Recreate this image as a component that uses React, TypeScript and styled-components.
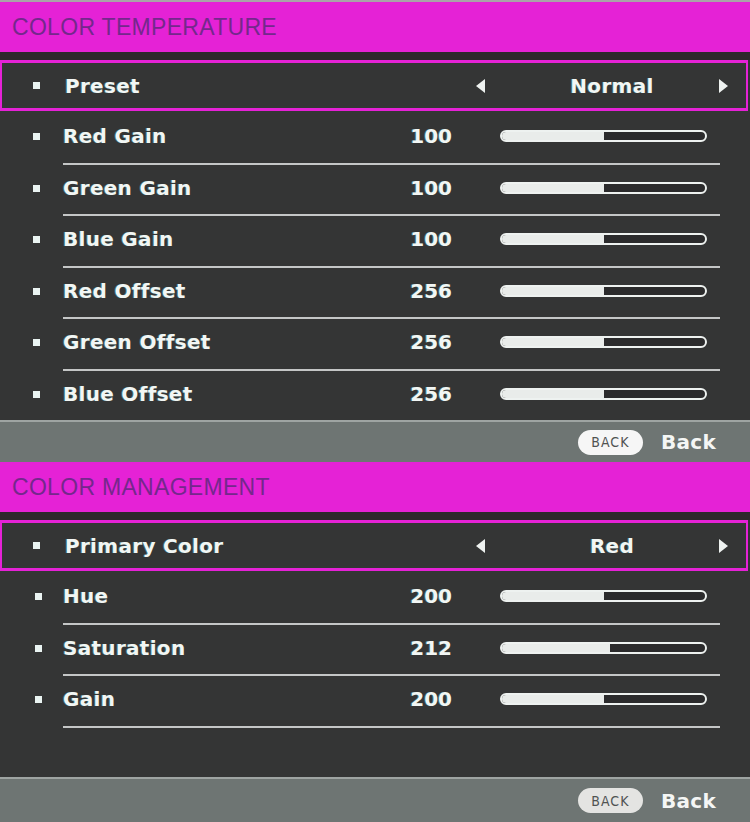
import React from 'react'
import styled, { createGlobalStyle } from 'styled-components'

const GlobalStyle = createGlobalStyle`
    html, body {
        margin: 0;
        padding: 0;
        background: #333434;
    }
`

const MAGENTA = '#e522d6'
const BG = '#343535'

const Screen = styled.div`
    width: 750px;
    height: 822px;
    background-color: ${BG};
    border-top: 2px solid #a9a4a8;
    box-sizing: border-box;
    display: flex;
    flex-direction: column;
    font-family: "DejaVu Sans", Verdana, sans-serif;
    overflow: hidden;
`

const Header = styled.div<{ h: number }>`
    height: ${props => props.h}px;
    background-color: ${MAGENTA};
    display: flex;
    align-items: center;
    padding-left: 12px;
    font-family: "Liberation Sans", Arial, sans-serif;
    font-size: 23px;
    letter-spacing: 0.3px;
    color: #74288c;
    flex-shrink: 0;
`

const Band = styled.div`
    height: 8px;
    background-color: #2d282d;
    flex-shrink: 0;
`

const Selected = styled.div`
    height: 51px;
    box-sizing: border-box;
    margin-right: 2px;
    border-top: 3px solid ${MAGENTA};
    border-bottom: 3px solid ${MAGENTA};
    border-left: 2px solid ${MAGENTA};
    border-right: 2px solid ${MAGENTA};
    display: flex;
    align-items: center;
    flex-shrink: 0;
`

const Row = styled.div`
    height: 51.5px;
    display: flex;
    flex-shrink: 0;
`

const BulletCell = styled.div<{ offset: number }>`
    width: 63px;
    flex-shrink: 0;
    display: flex;
    align-items: center;
    padding-left: ${props => props.offset}px;
    box-sizing: border-box;
`

const Bullet = styled.div`
    width: 7px;
    height: 7px;
    background-color: #eaf4f2;
`

const Body = styled.div<{ first: boolean }>`
    flex: 1;
    margin-right: 30px;
    padding-right: 13px;
    border-top: ${props => (props.first ? '2px solid transparent' : '2px solid #c4c6c6')};
    display: flex;
    align-items: center;
    padding-bottom: 3px;
`

const Label = styled.div`
    flex: 1;
    font-size: 20px;
    font-weight: bold;
    letter-spacing: 0.3px;
    color: #f2f6f4;
    text-shadow: -1px 0 0 rgba(90, 230, 230, 0.35);
    white-space: nowrap;
`

const Value = styled.div`
    width: 80px;
    margin-right: 48px;
    text-align: right;
    font-size: 20px;
    font-weight: bold;
    color: #f2f6f4;
    text-shadow: -1px 0 0 rgba(90, 230, 230, 0.35);
`

const Track = styled.div`
    width: 207px;
    height: 12px;
    box-sizing: border-box;
    border: 2px solid #eef2f0;
    border-radius: 6px;
    background-color: #2b2b2c;
    overflow: hidden;
`

const Fill = styled.div`
    height: 100%;
    background-color: #e9ecea;
`

const Choice = styled.div`
    width: 252px;
    margin-right: 18px;
    display: flex;
    align-items: center;
`

const Arrow = styled.div<{ direction: 'left' | 'right' }>`
    width: 0;
    height: 0;
    border-top: 7px solid transparent;
    border-bottom: 7px solid transparent;
    border-left: ${props => (props.direction === 'right' ? '9px solid #eef2f0' : 'none')};
    border-right: ${props => (props.direction === 'left' ? '9px solid #eef2f0' : 'none')};
`

const ChoiceText = styled.div`
    flex: 1;
    padding-left: 20px;
    text-align: center;
    font-size: 20px;
    font-weight: bold;
    letter-spacing: 0.3px;
    color: #f2f6f4;
    text-shadow: -1px 0 0 rgba(90, 230, 230, 0.35);
`

const Filler = styled.div`
    flex: 1;
`

const Footer = styled.div<{ h: number }>`
    height: ${props => props.h}px;
    box-sizing: border-box;
    border-top: 2px solid #9ea4a2;
    background-color: #6e7573;
    display: flex;
    align-items: center;
    justify-content: flex-end;
    padding-right: 34px;
    gap: 18px;
    flex-shrink: 0;
`

const Pill = styled.div<{ tone: string }>`
    width: 65px;
    height: 25px;
    border-radius: 13px;
    background-color: ${props => props.tone};
    display: flex;
    align-items: center;
    justify-content: center;
    font-family: "DejaVu Sans Condensed", "DejaVu Sans", sans-serif;
    font-size: 14px;
    letter-spacing: 1px;
    color: #505352;
`

const BackText = styled.div`
    font-size: 20px;
    font-weight: bold;
    letter-spacing: 0.3px;
    color: #f4f6f5;
`

type Item = { label: string; value?: number; max?: number }

const SliderRow: React.FC<{ item: Item; first: boolean; offset: number }> = ({ item, first, offset }) => (
    <Row>
        <BulletCell offset={offset}>{item.label && <Bullet />}</BulletCell>
        <Body first={first}>
            <Label>{item.label}</Label>
            {item.value !== undefined && (
                <>
                    <Value>{item.value}</Value>
                    <Track>
                        <Fill style={{ width: `${(item.value / (item.max || 1)) * 100}%` }} />
                    </Track>
                </>
            )}
        </Body>
    </Row>
)

const tempRows: Item[] = [
    { label: 'Red Gain', value: 100, max: 200 },
    { label: 'Green Gain', value: 100, max: 200 },
    { label: 'Blue Gain', value: 100, max: 200 },
    { label: 'Red Offset', value: 256, max: 511 },
    { label: 'Green Offset', value: 256, max: 511 },
    { label: 'Blue Offset', value: 256, max: 511 },
]

const mgmtRows: Item[] = [
    { label: 'Hue', value: 200, max: 400 },
    { label: 'Saturation', value: 212, max: 400 },
    { label: 'Gain', value: 200, max: 400 },
    { label: '' },
]

const App: React.FC = () => {
    return (
        <>
            <GlobalStyle />
            <Screen>
                <Header h={50}>COLOR TEMPERATURE</Header>
                <Band />
                <Selected>
                    <BulletCell offset={31}><Bullet /></BulletCell>
                    <Label>Preset</Label>
                    <Choice>
                        <Arrow direction="left" />
                        <ChoiceText>Normal</ChoiceText>
                        <Arrow direction="right" />
                    </Choice>
                </Selected>
                {tempRows.map((item, i) => (
                    <SliderRow key={item.label} item={item} first={i === 0} offset={33} />
                ))}
                <Footer h={42}>
                    <Pill tone="#f6f6f6">BACK</Pill>
                    <BackText>Back</BackText>
                </Footer>

                <Header h={50}>COLOR MANAGEMENT</Header>
                <Band />
                <Selected>
                    <BulletCell offset={31}><Bullet /></BulletCell>
                    <Label>Primary Color</Label>
                    <Choice>
                        <Arrow direction="left" />
                        <ChoiceText>Red</ChoiceText>
                        <Arrow direction="right" />
                    </Choice>
                </Selected>
                {mgmtRows.map((item, i) => (
                    <SliderRow key={item.label || 'empty'} item={item} first={i === 0} offset={35} />
                ))}
                <Filler />
                <Footer h={45}>
                    <Pill tone="#e4e4e2">BACK</Pill>
                    <BackText>Back</BackText>
                </Footer>
            </Screen>
        </>
    )
}

export default App
